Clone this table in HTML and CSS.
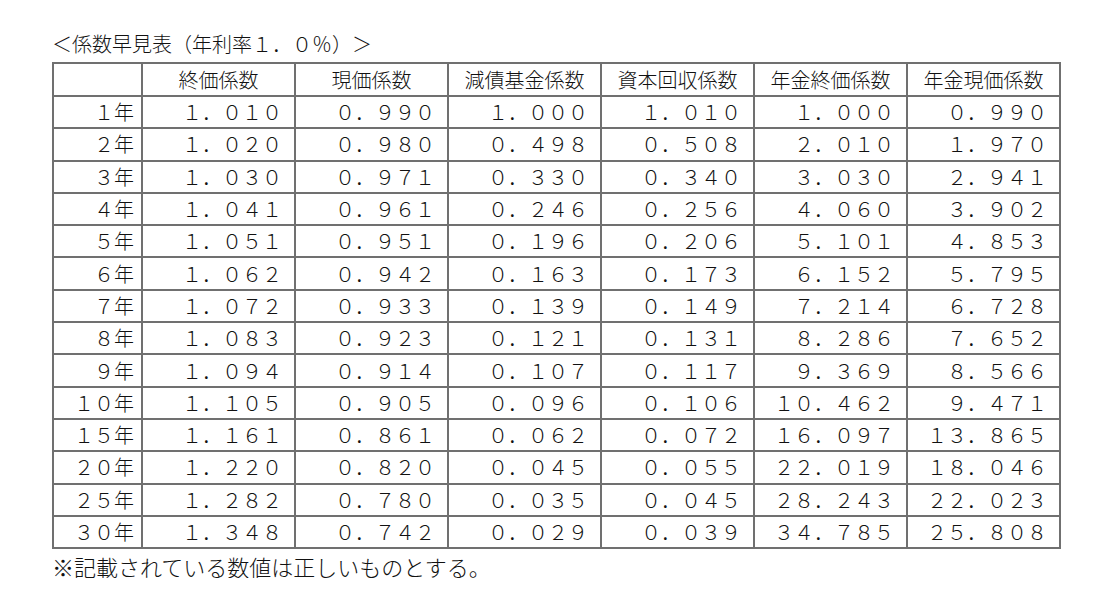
FILE: index.html
```html
<!DOCTYPE html>
<html lang="ja">
<head>
<meta charset="utf-8">
<title>係数早見表</title>
<link rel="stylesheet" href="styles.css">
</head>
<body>
<div class="page">
  <p class="title">＜係数早見表（年利率１．０％）＞</p>
  <table class="coef">
    <colgroup>
      <col class="c-label"><col class="c-num"><col class="c-num"><col class="c-num"><col class="c-num"><col class="c-num"><col class="c-num">
    </colgroup>
    <thead>
      <tr><th></th><th>終価係数</th><th>現価係数</th><th>減債基金係数</th><th>資本回収係数</th><th>年金終価係数</th><th>年金現価係数</th></tr>
    </thead>
    <tbody>
      <tr><td class="lab">１年</td><td>１．０１０</td><td>０．９９０</td><td>１．０００</td><td>１．０１０</td><td>１．０００</td><td>０．９９０</td></tr>
      <tr><td class="lab">２年</td><td>１．０２０</td><td>０．９８０</td><td>０．４９８</td><td>０．５０８</td><td>２．０１０</td><td>１．９７０</td></tr>
      <tr><td class="lab">３年</td><td>１．０３０</td><td>０．９７１</td><td>０．３３０</td><td>０．３４０</td><td>３．０３０</td><td>２．９４１</td></tr>
      <tr><td class="lab">４年</td><td>１．０４１</td><td>０．９６１</td><td>０．２４６</td><td>０．２５６</td><td>４．０６０</td><td>３．９０２</td></tr>
      <tr><td class="lab">５年</td><td>１．０５１</td><td>０．９５１</td><td>０．１９６</td><td>０．２０６</td><td>５．１０１</td><td>４．８５３</td></tr>
      <tr><td class="lab">６年</td><td>１．０６２</td><td>０．９４２</td><td>０．１６３</td><td>０．１７３</td><td>６．１５２</td><td>５．７９５</td></tr>
      <tr><td class="lab">７年</td><td>１．０７２</td><td>０．９３３</td><td>０．１３９</td><td>０．１４９</td><td>７．２１４</td><td>６．７２８</td></tr>
      <tr><td class="lab">８年</td><td>１．０８３</td><td>０．９２３</td><td>０．１２１</td><td>０．１３１</td><td>８．２８６</td><td>７．６５２</td></tr>
      <tr><td class="lab">９年</td><td>１．０９４</td><td>０．９１４</td><td>０．１０７</td><td>０．１１７</td><td>９．３６９</td><td>８．５６６</td></tr>
      <tr><td class="lab">１０年</td><td>１．１０５</td><td>０．９０５</td><td>０．０９６</td><td>０．１０６</td><td>１０．４６２</td><td>９．４７１</td></tr>
      <tr><td class="lab">１５年</td><td>１．１６１</td><td>０．８６１</td><td>０．０６２</td><td>０．０７２</td><td>１６．０９７</td><td>１３．８６５</td></tr>
      <tr><td class="lab">２０年</td><td>１．２２０</td><td>０．８２０</td><td>０．０４５</td><td>０．０５５</td><td>２２．０１９</td><td>１８．０４６</td></tr>
      <tr><td class="lab">２５年</td><td>１．２８２</td><td>０．７８０</td><td>０．０３５</td><td>０．０４５</td><td>２８．２４３</td><td>２２．０２３</td></tr>
      <tr><td class="lab">３０年</td><td>１．３４８</td><td>０．７４２</td><td>０．０２９</td><td>０．０３９</td><td>３４．７８５</td><td>２５．８０８</td></tr>
    </tbody>
  </table>
  <p class="note">※記載されている数値は正しいものとする。</p>
</div>
</body>
</html>
```
FILE: styles.css
```css
html, body {
  margin: 0;
  padding: 0;
  background: #ffffff;
}
body {
  font-family: "Noto Sans CJK JP", "Noto Sans", sans-serif;
  font-size: 20px;
  color: #111;
}
.page {
  padding: 32px 0 0 52px;
}
.title {
  margin: 0 0 6px 0;
  line-height: 24px;
  height: 24px;
  font-weight: 300;
}
.coef {
  border-collapse: collapse;
  table-layout: fixed;
  width: 1007px;
}
.c-label { width: 89px; }
.c-num { width: 153px; }
.coef th, .coef td {
  border: 2px solid #707070;
  padding: 0 12px 0 0;
  line-height: 24px;
  font-weight: 300;
  white-space: nowrap;
}
.coef th {
  height: 31px;
  text-align: center;
  padding: 0;
}
.coef td {
  height: 30.3px;
  text-align: right;
}
.coef td.lab {
  padding-right: 7px;
}
.note {
  margin: 5px 0 0 0;
  line-height: 24px;
  font-size: 22px;
  font-weight: 300;
}
```
